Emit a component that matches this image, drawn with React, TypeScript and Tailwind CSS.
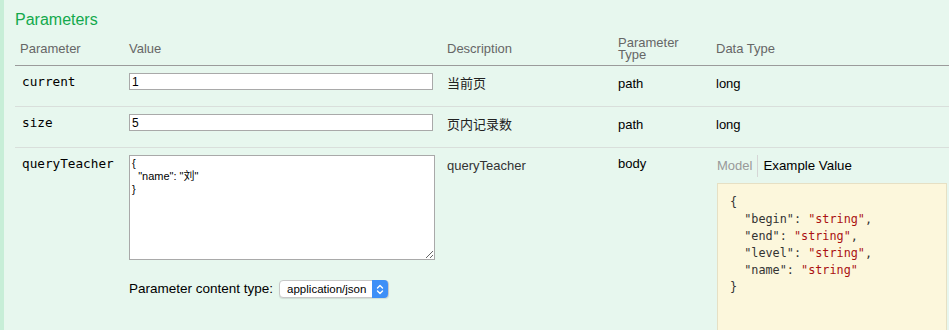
import React from 'react';

const sans = { fontFamily: '"Liberation Sans", "Noto Sans CJK SC", sans-serif' };

interface Param {
  name: string;
  value: string;
  description: string;
  paramType: string;
  dataType: string;
}

const params: Param[] = [
  { name: 'current', value: '1', description: '当前页', paramType: 'path', dataType: 'long' },
  { name: 'size', value: '5', description: '页内记录数', paramType: 'path', dataType: 'long' },
];

const cols = 'grid grid-cols-[109px_318px_171px_98px_1fr]';

const ParamRow: React.FC<{ p: Param }> = ({ p }) => (
  <div className={`${cols} h-[41px] border-b border-[#d9dfdb] text-[13px] text-black`}>
    <div className="pl-[7px] pt-[6px] font-['DejaVu_Sans_Mono',monospace] text-[12.7px]">{p.name}</div>
    <div className="pl-[5px] pt-[7px]">
      <input
        readOnly
        value={p.value}
        className="block h-[17px] w-[304px] border border-[#a9a9a9] bg-white px-[2px] text-[12px] text-black outline-none"
      />
    </div>
    <div className="pl-[5px] pt-[8px] text-[#222]">{p.description}</div>
    <div className="pl-[5px] pt-[8px]">{p.paramType}</div>
    <div className="pl-[5px] pt-[8px]">{p.dataType}</div>
  </div>
);

const Chevrons = () => (
  <svg width="8" height="11" viewBox="0 0 8 11" fill="none" stroke="white" strokeWidth="1.4" strokeLinecap="round" strokeLinejoin="round">
    <path d="M1.5 4 L4 1.5 L6.5 4" />
    <path d="M1.5 7 L4 9.5 L6.5 7" />
  </svg>
);

export default function App() {
  return (
    <div className="h-[330px] w-[949px] overflow-hidden border-l-[4px] border-[#c7eed7] bg-[#e7f7ee]" style={sans}>
      <div className="pl-[11px]">
        <h4 className="pt-[10px] text-[16px] leading-[20px] text-[#13a94c]">Parameters</h4>

        {/* header */}
        <div className={`${cols} mt-[2px] h-[34px] items-center border-b border-[#9b9b9b] text-[13px] text-[#666]`}>
          <div className="pl-[5px]">Parameter</div>
          <div className="pl-[5px]">Value</div>
          <div className="pl-[5px]">Description</div>
          <div className="pl-[5px] pt-[1px] leading-[12.5px]">
            Parameter
            <br />
            Type
          </div>
          <div className="pl-[5px]">Data Type</div>
        </div>

        {params.map((p) => (
          <ParamRow key={p.name} p={p} />
        ))}

        {/* body param */}
        <div className={`${cols} text-[13px] text-black`}>
          <div className="pl-[7px] pt-[6px] font-['DejaVu_Sans_Mono',monospace] text-[12.7px]">queryTeacher</div>
          <div className="pl-[5px] pt-[7px]">
            <textarea
              readOnly
              value={'{\n  "name": "刘"\n}'}
              className="block h-[105px] w-[306px] resize-y border border-[#a9a9a9] bg-white px-[2px] py-[1px] text-[11px] leading-[13px] text-black outline-none"
              style={sans}
            />
            <div className="mt-[19px] flex items-center">
              <span className="text-[13.5px]">Parameter content type:</span>
              <div className="ml-[6px] flex h-[18px] w-[110px] items-center justify-between rounded-[4px] border border-[#c8c8c8] bg-white pl-[7px] shadow-[0_1px_1px_rgba(0,0,0,0.1)]">
                <span className="text-[11.5px]">application/json</span>
                <div className="flex h-[18px] w-[16px] items-center justify-center rounded-r-[4px] bg-[#3d8ff7]">
                  <Chevrons />
                </div>
              </div>
            </div>
          </div>
          <div className="pl-[5px] pt-[8px] text-[#333]">queryTeacher</div>
          <div className="pl-[5px] pt-[6px]">body</div>
          <div className="pl-[6px] pt-[7px]">
            <div className="flex h-[22px] items-center">
              <span className="pr-[5px] text-[#999]">Model</span>
              <span className="h-[22px] border-l border-[#d6d6d6]" />
              <span className="pl-[5px] text-[13.3px]">Example Value</span>
            </div>
            <div className="mt-[6px] h-[160px] w-[230px] border border-[#e6e0c4] bg-[#fcf7dc] px-[12px] pt-[10px]">
              <pre className="font-['DejaVu_Sans_Mono',monospace] text-[11.8px] leading-[17px] text-[#333]">
                {'{\n'}
                {'  "begin": '}<span className="text-[#a11]">"string"</span>{',\n'}
                {'  "end": '}<span className="text-[#a11]">"string"</span>{',\n'}
                {'  "level": '}<span className="text-[#a11]">"string"</span>{',\n'}
                {'  "name": '}<span className="text-[#a11]">"string"</span>{'\n'}
                {'}'}
              </pre>
            </div>
          </div>
        </div>
      </div>
    </div>
  );
}
